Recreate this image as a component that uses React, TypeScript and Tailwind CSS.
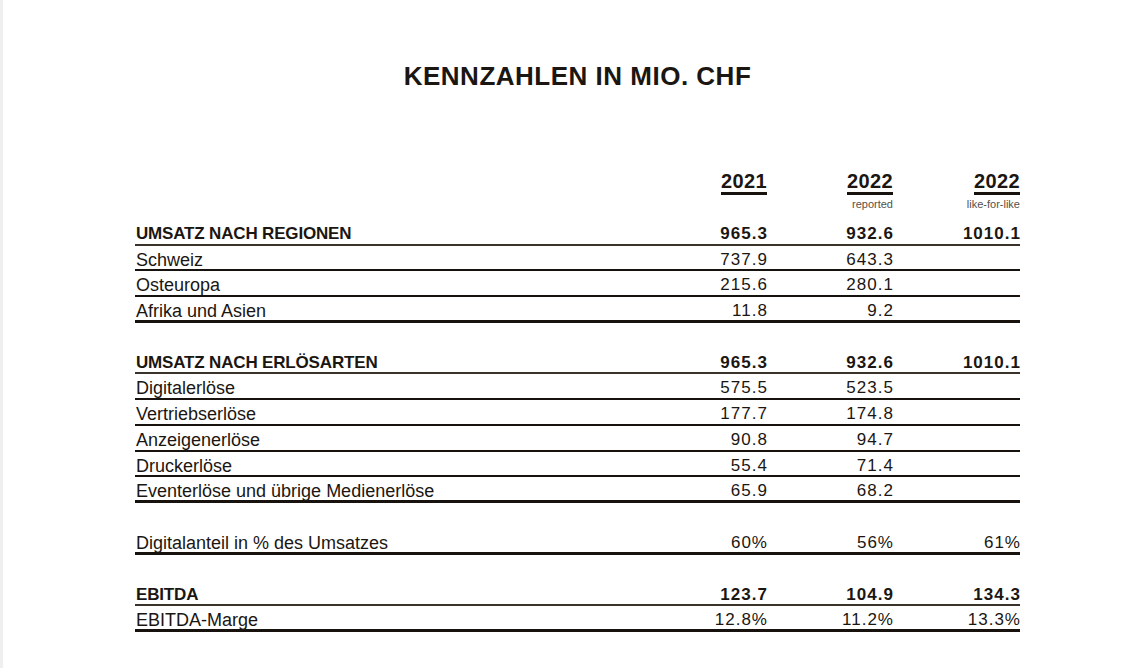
import React from "react";

type Row = { label: string; v: [string, string, string]; bold?: boolean; last?: boolean; first?: boolean };

const sections: Row[][] = [
  [
    { label: "UMSATZ NACH REGIONEN", v: ["965.3", "932.6", "1010.1"], bold: true, first: true },
    { label: "Schweiz", v: ["737.9", "643.3", ""] },
    { label: "Osteuropa", v: ["215.6", "280.1", ""] },
    { label: "Afrika und Asien", v: ["11.8", "9.2", ""], last: true },
  ],
  [
    { label: "UMSATZ NACH ERLÖSARTEN", v: ["965.3", "932.6", "1010.1"], bold: true, first: true },
    { label: "Digitalerlöse", v: ["575.5", "523.5", ""] },
    { label: "Vertriebserlöse", v: ["177.7", "174.8", ""] },
    { label: "Anzeigenerlöse", v: ["90.8", "94.7", ""] },
    { label: "Druckerlöse", v: ["55.4", "71.4", ""] },
    { label: "Eventerlöse und übrige Medienerlöse", v: ["65.9", "68.2", ""], last: true },
  ],
  [{ label: "Digitalanteil in % des Umsatzes", v: ["60%", "56%", "61%"], last: true }],
  [
    { label: "EBITDA", v: ["123.7", "104.9", "134.3"], bold: true, first: true },
    { label: "EBITDA-Marge", v: ["12.8%", "11.2%", "13.3%"], last: true },
  ],
];

function TableRow({ r }: { r: Row }) {
  const border = r.last
    ? "border-b-[3px] border-[#17120e]"
    : r.first
    ? "border-b-[2px] border-[#3a332c]"
    : "border-b-[2px] border-[#17120e]";
  const weight = r.bold ? "font-bold" : "font-normal";
  return (
    <div className={`grid grid-cols-[1fr_126px_126px_127px] h-[25.7px] box-border pt-[4px] items-center ${border}`}>
      <div className={`${r.bold ? "text-[17px] tracking-[-0.01em]" : "text-[18px]"} leading-[20px] pl-[1px] ${weight}`}>{r.label}</div>
      {r.v.map((x, i) => (
        <div key={i} className={`text-right text-[17px] leading-[20px] tracking-[0.06em] -mr-[1px] ${weight}`}>
          {x}
        </div>
      ))}
    </div>
  );
}

export default function App() {
  return (
    <div
      className="w-[1126px] h-[668px] bg-white text-[#1b1611] border-l-[3px] border-[#efefef] box-border overflow-hidden"
      style={{ fontFamily: '"Liberation Sans", Arial, sans-serif' }}
    >
      <div className="pt-[61px] text-center pl-[26px]">
        <h1 className="text-[26px] leading-[30px] font-bold tracking-[0.5px]">KENNZAHLEN IN MIO. CHF</h1>
      </div>
      <div className="ml-[132px] w-[885px] mt-[79px]">
        <div className="grid grid-cols-[1fr_126px_126px_127px] items-start">
          <div />
          {[
            ["2021", ""],
            ["2022", "reported"],
            ["2022", "like-for-like"],
          ].map(([y, s], i) => (
            <div key={i} className="flex flex-col items-end">
              <span className="text-[20px] leading-[22px] font-bold tracking-[0.02em] border-b-[3px] border-[#17120e]">
                {y}
              </span>
              <span className="text-[11px] leading-[12px] mt-[3px] h-[12px] text-[#555049] font-light">{s}</span>
            </div>
          ))}
        </div>
        <div className="mt-[10px]">
          {sections.map((sec, si) => (
            <div key={si} className={si === 0 ? "" : "mt-[26px]"}>
              {sec.map((r, ri) => (
                <TableRow key={ri} r={r} />
              ))}
            </div>
          ))}
        </div>
      </div>
    </div>
  );
}
